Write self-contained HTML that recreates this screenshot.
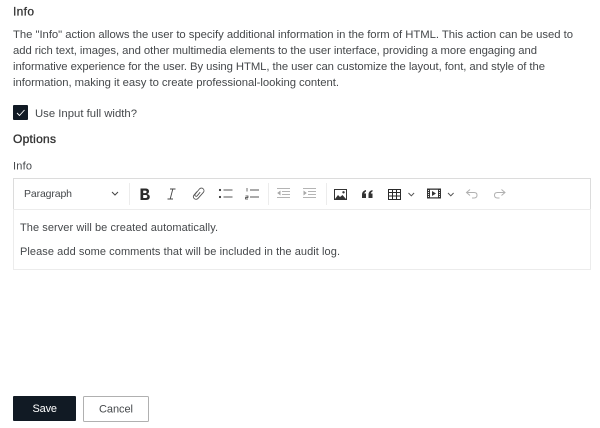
<!DOCTYPE html>
<html><head><meta charset="utf-8">
<style>
html,body{margin:0;padding:0;background:#fff;width:600px;height:428px;overflow:hidden}
svg{display:block;filter:blur(.25px)}
text{font-family:"Liberation Sans",sans-serif;font-size:11.3px;fill:#45484b}
</style></head><body>
<svg width="600" height="428" viewBox="0 0 600 428" xmlns="http://www.w3.org/2000/svg">
<rect width="600" height="428" fill="#fff"/>
<text x="13" y="15.5" textLength="21" lengthAdjust="spacing" style="font-size:12px;fill:#333;stroke:#333;stroke-width:.25">Info</text>
<text x="13" y="38" textLength="560" lengthAdjust="spacing">The "Info" action allows the user to specify additional information in the form of HTML. This action can be used to</text>
<text x="13" y="54" textLength="524" lengthAdjust="spacing">add rich text, images, and other multimedia elements to the user interface, providing a more engaging and</text>
<text x="13" y="70" textLength="532" lengthAdjust="spacing">informative experience for the user. By using HTML, the user can customize the layout, font, and style of the</text>
<text x="13" y="86" textLength="326" lengthAdjust="spacing">information, making it easy to create professional-looking content.</text>

<rect x="13" y="105" width="15" height="15" rx="1" fill="#111a24"/>
<path d="M17 113l2.500 2.500 5-5.500" fill="none" stroke="#fff" stroke-width=".9"/>
<text x="35" y="117" textLength="102" lengthAdjust="spacing">Use Input full width?</text>
<text x="13" y="143" textLength="43" lengthAdjust="spacing" style="font-size:12px;fill:#333;stroke:#333;stroke-width:.35">Options</text>
<text x="13" y="169.500" textLength="19" lengthAdjust="spacing" style="font-size:11px">Info</text>

<!-- editor -->
<rect x="13.500" y="178.500" width="577" height="31" fill="#fff" stroke="#dcdcdc"/>
<rect x="13.500" y="209.500" width="577" height="60" fill="#fff" stroke="#ececec"/>
<text x="24" y="197" textLength="48" lengthAdjust="spacing" style="font-size:10.500px">Paragraph</text>
<path d="M112 192l3 3 3-3" fill="none" stroke="#444" stroke-width="1"/>
<path d="M129.500 183v22M268.500 183v22M326.500 183v22" stroke="#ececec"/>

<!-- bold -->
<path d="M140.500 188.500h5q3.500 0 3.500 2.900 0 1.900-1.800 2.600 2.600.7 2.600 2.900 0 3.100-3.700 3.100h-5.600zM143.200 190.600v2.500h2q1.400 0 1.400-1.200t-1.400-1.300zM143.200 195v3h2.400q1.700 0 1.700-1.500t-1.700-1.500z" fill="#2a2a2a"/>
<!-- italic -->
<path d="M170 189h5.500M167.500 199h5.500M172.800 189l-2.600 10" fill="none" stroke="#444" stroke-width=".9"/>
<!-- link -->
<path d="M197 191.500l-3 3.500a2.600 2.600 0 0 0 4 3.400l5.500-6.200a2.600 2.600 0 0 0-4-3.300l-4.300 5.200a1.300 1.300 0 0 0 2 1.700l3-3.600" fill="none" stroke="#555" stroke-width=".9"/>
<!-- bullets -->
<circle cx="220" cy="190" r="1.100" fill="#333"/><circle cx="220" cy="197" r="1.100" fill="#333"/>
<path d="M223.500 190h9M223.500 197h9" stroke="#555"/>
<!-- numbered -->
<path d="M247 188v3.500M245.500 196h2.500v1.500h-2.500v1.500h2.500" fill="none" stroke="#333" stroke-width=".7"/>
<path d="M250 190h9M250 197h9" stroke="#555"/>
<!-- outdent -->
<path d="M277 188.500h13M282 191.500h8M282 194.500h8M277 197.500h13" stroke="#b4b4b4"/>
<path d="M280.500 190.500l-3.300 2.500 3.300 2.500z" fill="#a8a8a8"/>
<!-- indent -->
<path d="M303 188.500h13M308 191.500h8M308 194.500h8M303 197.500h13" stroke="#b4b4b4"/>
<path d="M303.500 190.500l3.300 2.500-3.300 2.500z" fill="#a8a8a8"/>
<!-- image -->
<rect x="334.500" y="189.500" width="12" height="10" fill="#fff" stroke="#333"/>
<path d="M335 199l3-4 2 2 2.500-2 3.500 4z" fill="#333"/><circle cx="343.500" cy="192.300" r="1.200" fill="#333"/>
<!-- quote -->
<path d="M362 198v-3.500q0-3.500 4-4.500v1.500q-1.500.5-1.700 2h1.700v4.500zM368.500 198v-3.500q0-3.500 4-4.500v1.500q-1.500.5-1.700 2h1.700v4.500z" fill="#333"/>
<!-- table -->
<rect x="388.500" y="189.500" width="12" height="10" fill="none" stroke="#2a2a2a"/>
<path d="M388 192.500h13M388 196h13M392.500 190v9M396.500 190v9" stroke="#2a2a2a"/>
<path d="M408.500 193l2.800 2.800 2.800-2.800" fill="none" stroke="#555"/>
<!-- media -->
<rect x="427" y="188.500" width="14" height="10" fill="#333"/>
<rect x="430" y="189.800" width="8" height="7.500" fill="#fff"/>
<path d="M432 191l4 2.500-4 2.500z" fill="#333"/>
<path d="M428.500 190v7M439.500 190v7" stroke="#fff" stroke-width=".9" stroke-dasharray="1 1"/>
<path d="M448 193l2.800 2.800 2.800-2.800" fill="none" stroke="#555"/>
<!-- undo / redo -->
<path d="M470 189.500l-3.500 3 3.500 3M467 192.500h7q3 0 3 2.700t-3 2.800h-2" fill="none" stroke="#b0b0b0"/>
<path d="M501.500 189.500l3.500 3-3.500 3M504.500 192.500h-7q-3 0-3 2.700t3 2.800h2" fill="none" stroke="#b0b0b0"/>

<text x="20" y="231" textLength="198" lengthAdjust="spacing" style="font-size:11px">The server will be created automatically.</text>
<text x="20" y="255" textLength="320" lengthAdjust="spacing" style="font-size:11px">Please add some comments that will be included in the audit log.</text>

<!-- buttons -->
<rect x="13" y="396" width="63" height="25" rx="1" fill="#111a24"/>
<text x="32.500" y="412" textLength="24.500" lengthAdjust="spacing" style="fill:#fff;font-size:11px">Save</text>
<rect x="83.500" y="396.500" width="65" height="25" rx="1" fill="#fff" stroke="#b0b0b0"/>
<text x="99" y="412.500" textLength="34" lengthAdjust="spacing" style="font-size:11px">Cancel</text>
</svg>
</body></html>
